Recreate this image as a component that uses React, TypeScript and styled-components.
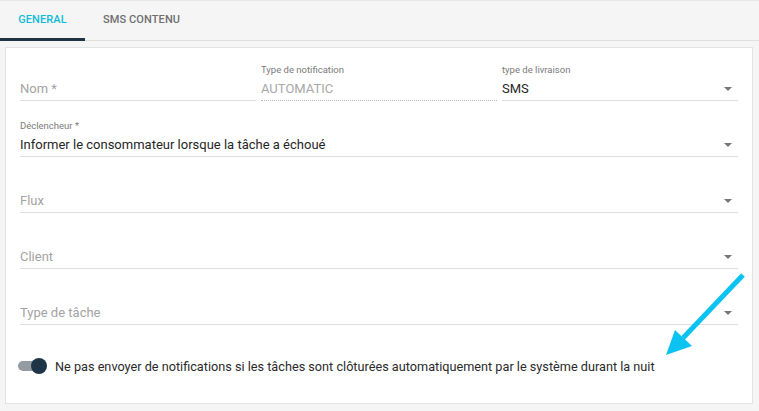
import React from 'react';
import styled, { createGlobalStyle } from 'styled-components';

const GlobalStyle = createGlobalStyle`
  html, body {
    margin: 0;
    padding: 0;
    background: #f5f5f5;
    font-family: Roboto, "Liberation Sans", Arial, sans-serif;
  }
`;

const Page = styled.div`
  position: relative;
  width: 759px;
  height: 411px;
  background: #f5f5f5;
  overflow: hidden;
`;

const TabBar = styled.div`
  display: flex;
  height: 39px;
  border-top: 1px solid #e6e6e6;
  border-bottom: 1px solid #e0e0e0;
`;

const Tab = styled.div<{ $active?: boolean }>`
  display: flex;
  align-items: center;
  justify-content: center;
  padding: 0 18px;
  font-size: 11px;
  font-weight: 500;
  text-transform: uppercase;
  letter-spacing: 0.1px;
  color: ${p => (p.$active ? '#10bcd8' : '#6f6f6f')};
  border-bottom: 3px solid ${p => (p.$active ? '#1f3344' : 'transparent')};
  margin-bottom: -1px;
  box-sizing: border-box;
  width: ${p => (p.$active ? '85px' : 'auto')};
`;

const Card = styled.div`
  margin: 6px 6px 0 5px;
  height: 357px;
  box-sizing: border-box;
  background: #ffffff;
  border: 1px solid #e3e3e3;
  padding: 16px 14px 0 14px;
`;

const Row = styled.div<{ $cols?: number }>`
  display: grid;
  grid-template-columns: repeat(${p => p.$cols ?? 1}, 1fr);
  gap: 5px;
  margin-bottom: 19px;
`;

const Field = styled.div`
  display: flex;
  flex-direction: column;
`;

const Label = styled.div`
  height: 12px;
  line-height: 12px;
  font-size: 9.5px;
  color: #7a7a7a;
  white-space: nowrap;
`;

const Input = styled.div<{ $disabled?: boolean }>`
  position: relative;
  height: 24px;
  display: flex;
  align-items: center;
  border-bottom: 1px ${p => (p.$disabled ? 'dotted #bdbdbd' : 'solid #e0e0e0')};
`;

const Value = styled.span<{ $tone: 'value' | 'placeholder' | 'disabled' }>`
  font-size: 13px;
  color: ${p =>
    p.$tone === 'value' ? '#262626' : p.$tone === 'disabled' ? '#a8a8a8' : '#a3a3a3'};
`;

const Caret = styled.span`
  position: absolute;
  right: 6px;
  top: 50%;
  margin-top: -1px;
  width: 0;
  height: 0;
  border-left: 4px solid transparent;
  border-right: 4px solid transparent;
  border-top: 4px solid #777777;
`;

const ToggleRow = styled.div`
  display: flex;
  align-items: center;
  gap: 8px;
  height: 20px;
  margin-top: 31px;
  margin-left: -2px;
`;

const Switch = styled.div`
  position: relative;
  width: 29px;
  height: 16px;
  display: flex;
  align-items: center;
`;

const Track = styled.div`
  width: 22px;
  height: 10px;
  border-radius: 5px;
  background: #949ba1;
`;

const Knob = styled.div`
  position: absolute;
  right: 0;
  top: 0;
  width: 16px;
  height: 16px;
  border-radius: 50%;
  background: #1d3547;
`;

const ToggleText = styled.span`
  font-size: 12.7px;
  color: #2a2a2a;
  white-space: nowrap;
`;

const Annotation = styled.svg`
  position: absolute;
  left: 0;
  top: 0;
  pointer-events: none;
`;

type FieldProps = {
  label?: string;
  value: string;
  tone: 'value' | 'placeholder' | 'disabled';
  select?: boolean;
};

const FormField: React.FC<FieldProps> = ({ label, value, tone, select }) => (
  <Field>
    <Label>{label ?? ''}</Label>
    <Input $disabled={tone === 'disabled'}>
      <Value $tone={tone}>{value}</Value>
      {select && <Caret />}
    </Input>
  </Field>
);

export default function App() {
  return (
    <Page>
      <GlobalStyle />
      <TabBar>
        <Tab $active>General</Tab>
        <Tab>SMS Contenu</Tab>
      </TabBar>
      <Card>
        <Row $cols={3}>
          <FormField value="Nom *" tone="placeholder" />
          <FormField label="Type de notification" value="AUTOMATIC" tone="disabled" />
          <FormField label="type de livraison" value="SMS" tone="value" select />
        </Row>
        <Row>
          <FormField
            label="Déclencheur *"
            value="Informer le consommateur lorsque la tâche a échoué"
            tone="value"
            select
          />
        </Row>
        <Row>
          <FormField value="Flux" tone="placeholder" select />
        </Row>
        <Row>
          <FormField value="Client" tone="placeholder" select />
        </Row>
        <Row>
          <FormField value="Type de tâche" tone="placeholder" select />
        </Row>
        <ToggleRow>
          <Switch>
            <Track />
            <Knob />
          </Switch>
          <ToggleText>
            Ne pas envoyer de notifications si les tâches sont clôturées automatiquement par le système durant la nuit
          </ToggleText>
        </ToggleRow>
      </Card>
      <Annotation width="759" height="411" viewBox="0 0 759 411">
        <line x1="743" y1="275" x2="683" y2="338" stroke="#0bc3f3" strokeWidth="5" />
        <polygon points="666,355 675,330 692,346" fill="#0bc3f3" />
      </Annotation>
    </Page>
  );
}
